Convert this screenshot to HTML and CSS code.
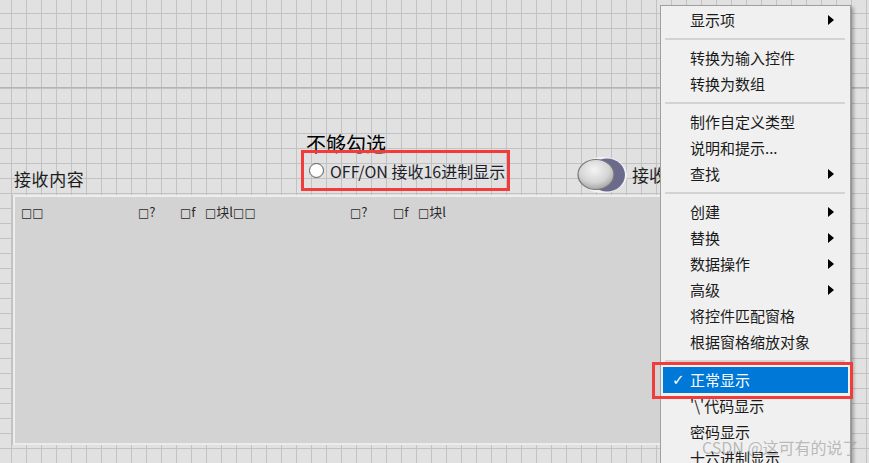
FILE: index.html
```html
<!DOCTYPE html>
<html lang="zh-CN">
  <head>
    <meta charset="UTF-8" />
    <meta name="viewport" content="width=device-width, initial-scale=1.0" />
    <link rel="stylesheet" href="styles.css">
  </head>
  <body>
    <div class="front-panel">
      <div class="caption">不够勾选</div>

      <label class="hex-option">
        <span class="radio"></span>
        <span class="hex-text">OFF/ON 接收16进制显示</span>
      </label>

      <div class="str-label">接收内容</div>

      <div class="toggle">
        <svg width="52" height="38" viewBox="0 0 52 38">
          <defs>
            <radialGradient id="knob" cx="0.45" cy="0.35" r="0.7">
              <stop offset="0" stop-color="#f4f4f4" />
              <stop offset="0.6" stop-color="#d4d4d4" />
              <stop offset="1" stop-color="#9a9a9a" />
            </radialGradient>
          </defs>
          <ellipse cx="27" cy="19" rx="24" ry="18" fill="#f2f2f2" />
          <ellipse cx="31" cy="19" rx="18" ry="16.5" fill="#6b6a8c" />
          <ellipse cx="20" cy="18.5" rx="18" ry="15" fill="url(#knob)" stroke="#777" stroke-width="1.2" />
        </svg>
        <span class="toggle-text">接收</span>
      </div>

      <div class="indicator">
        <div class="line">
          <span class="seg s1"><span class="box">□□</span></span>
          <span class="seg s2"><span class="box">□</span>?</span>
          <span class="seg s3"><span class="box">□</span>f</span>
          <span class="seg s4"><span class="box">□</span>块l<span class="box">□□</span></span>
          <span class="seg s5"><span class="box">□</span>?</span>
          <span class="seg s6"><span class="box">□</span>f</span>
          <span class="seg"><span class="box">□</span>块l</span>
        </div>
      </div>
    </div>

    <ul class="menu">
      <li class="item sub">显示项</li>
      <li class="sep"></li>
      <li class="item">转换为输入控件</li>
      <li class="item">转换为数组</li>
      <li class="sep"></li>
      <li class="item">制作自定义类型</li>
      <li class="item">说明和提示...</li>
      <li class="item sub">查找</li>
      <li class="sep"></li>
      <li class="item sub">创建</li>
      <li class="item sub">替换</li>
      <li class="item sub">数据操作</li>
      <li class="item sub">高级</li>
      <li class="item">将控件匹配窗格</li>
      <li class="item">根据窗格缩放对象</li>
      <li class="sep"></li>
      <li class="item active"><span class="check">✓</span>正常显示</li>
      <li class="item">'\'代码显示</li>
      <li class="item">密码显示</li>
      <li class="item">十六进制显示</li>
    </ul>

    <div class="mark-box"></div>
    <div class="watermark">CSDN @这可有的说了</div>
  </body>
</html>
```

FILE: styles.css
```css
body {
  margin: 0;
  width: 869px;
  height: 463px;
  overflow: hidden;
  position: relative;
  font-family: "Noto Sans CJK SC", "Noto Sans", sans-serif;
  color: #1e1e1e;
  background-color: #e1e1e1;
  background-image:
    linear-gradient(to bottom, transparent 87px, #b4b4b4 87px, #b4b4b4 88px, transparent 88px),
    linear-gradient(to right, #c2c2c2 1px, transparent 1px),
    linear-gradient(to bottom, #c2c2c2 1px, transparent 1px);
  background-size: 100% 100%, 15px 15px, 15px 15px;
  background-repeat: no-repeat, repeat, repeat;
  background-position: 0 0, 11px 0, 0 13px;
}

/* free canvas: objects sit where they were dropped */
.front-panel {
  position: absolute;
  inset: 0;
}

.caption {
  position: absolute;
  left: 306px;
  top: 132px;
  font-size: 20px;
  line-height: 24px;
  color: #000;
}

.hex-option {
  position: absolute;
  left: 301px;
  top: 150px;
  width: 209px;
  height: 41px;
  box-sizing: border-box;
  border: 3px solid #f23c3c;
  display: flex;
  align-items: center;
  gap: 6px;
  padding-left: 5px;
}

.radio {
  width: 13px;
  height: 13px;
  border-radius: 50%;
  border: 1px solid #5e5e5e;
  background: radial-gradient(circle at 45% 40%, #fff 55%, #e4e4e4 100%);
}

.hex-text {
  font-size: 16px;
  line-height: 20px;
  color: #1e1e2a;
}

.str-label {
  position: absolute;
  left: 14px;
  top: 168px;
  font-size: 17px;
  line-height: 22px;
  letter-spacing: 0.6px;
  color: #1c1c1c;
}

.toggle {
  position: absolute;
  left: 576px;
  top: 156px;
  display: flex;
  align-items: center;
  gap: 4px;
}

.toggle svg {
  display: block;
}

.toggle-text {
  font-size: 17px;
  line-height: 22px;
}

.indicator {
  position: absolute;
  left: 13px;
  top: 195px;
  width: 690px;
  height: 250px;
  box-sizing: border-box;
  background: #d3d3d3;
  border-top: 2px solid #ededed;
  border-left: 2px solid #ededed;
  border-bottom: 2px solid #ececec;
  box-shadow: -1px 0 0 #c2c2c2;
  padding: 7px 0 0 6px;
}

.line {
  display: flex;
  font-size: 13px;
  line-height: 16px;
  color: #2a2a2a;
}

.box {
  font-family: "DejaVu Sans", sans-serif;
  font-size: 12px;
}

.s1 { width: 117px; }
.s2 { width: 42px; }
.s3 { width: 25px; }
.s4 { width: 145px; }
.s5 { width: 43px; }
.s6 { width: 25px; }

.menu {
  position: absolute;
  left: 660px;
  top: 5px;
  width: 191px;
  height: 480px;
  box-sizing: border-box;
  margin: 0;
  padding: 1px 0 0;
  list-style: none;
  background: #f0f0f0;
  border: 1px solid #a0a0a0;
  box-shadow: 3px 2px 3px rgba(0, 0, 0, 0.25);
}

.item {
  position: relative;
  height: 26px;
  line-height: 26px;
  padding-left: 29px;
  font-size: 15px;
  color: #1a1a1a;
  white-space: nowrap;
}

.sub::after {
  content: "";
  position: absolute;
  right: 16px;
  top: 8px;
  border-left: 6px solid #000;
  border-top: 5px solid transparent;
  border-bottom: 5px solid transparent;
}

.sep {
  height: 2px;
  margin: 5px 5px 5px 4px;
  background: #d3d3d3;
}

.active {
  margin: 0 2px;
  padding-left: 27px;
  background: #0078d7;
  color: #fff;
}

.check {
  position: absolute;
  left: 9px;
  top: 0;
  font-family: "DejaVu Sans", sans-serif;
  font-size: 15px;
}

.mark-box {
  position: absolute;
  left: 652px;
  top: 362px;
  width: 201px;
  height: 37px;
  box-sizing: border-box;
  border: 3px solid #f23c3c;
}

.watermark {
  position: absolute;
  left: 702px;
  top: 436px;
  font-size: 16px;
  line-height: 22px;
  color: rgba(160, 160, 160, 0.7);
  white-space: nowrap;
}
```
